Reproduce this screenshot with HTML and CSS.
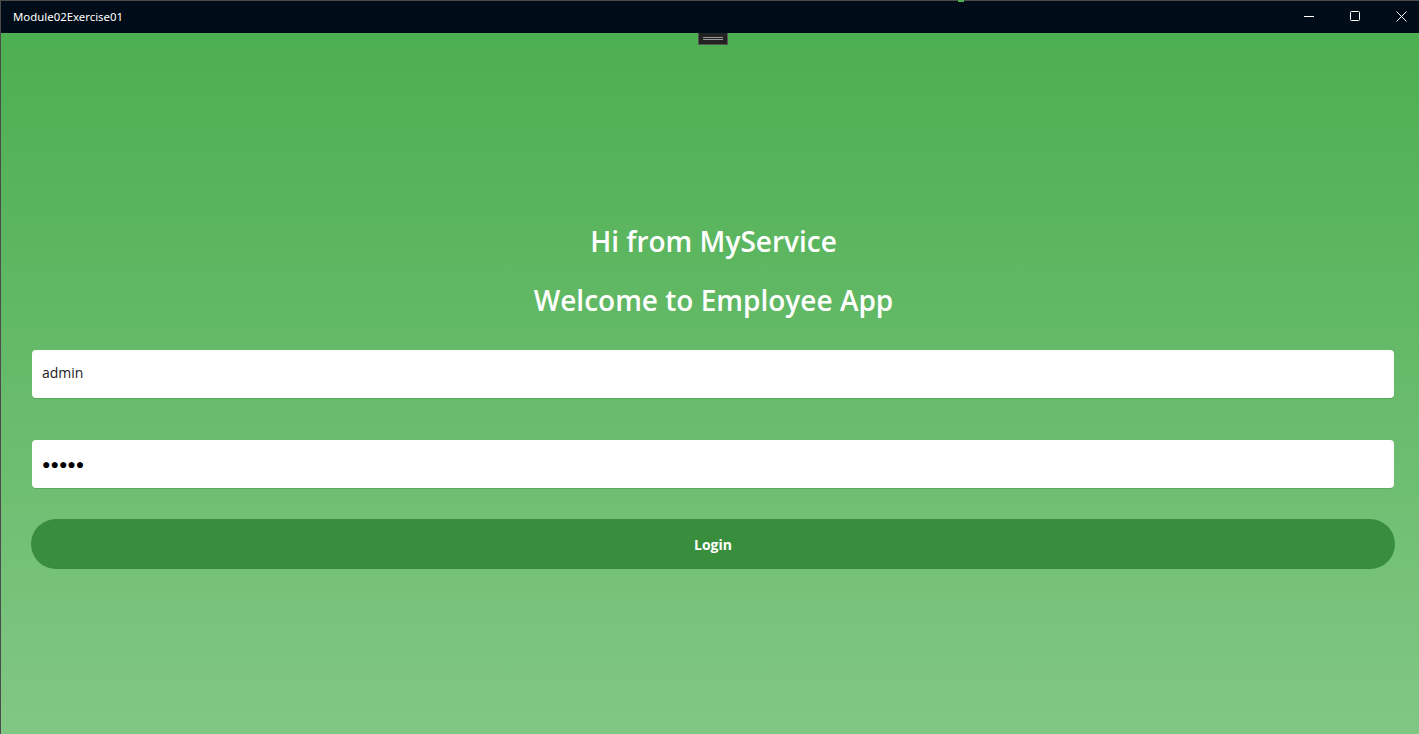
FILE: index.html
```html
<!DOCTYPE html>
<html>
<head>
<meta charset="utf-8">
<link rel="stylesheet" href="styles.css">
</head>
<body>
<div class="window">
  <div class="titlebar">
    <span class="title">Module02Exercise01</span>
    <span class="tb-accent"></span>
    <div class="controls">
      <span class="ctl">
        <svg width="10" height="10" viewBox="0 0 10 10"><path d="M0 5.5h10" stroke="#fff" stroke-width="1"/></svg>
      </span>
      <span class="ctl">
        <svg width="10" height="10" viewBox="0 0 10 10"><rect x="0.5" y="0.5" width="9" height="9" rx="1" fill="none" stroke="#fff" stroke-width="1"/></svg>
      </span>
      <span class="ctl">
        <svg width="11" height="11" viewBox="0 0 11 11"><path d="M0.5 0.5L10.5 10.5M10.5 0.5L0.5 10.5" stroke="#fff" stroke-width="1"/></svg>
      </span>
    </div>
  </div>
  <div class="content">
    <div class="handle"><span></span><span></span></div>
    <div class="form">
      <h1 class="hi">Hi from MyService</h1>
      <h2 class="welcome">Welcome to Employee App</h2>
      <div class="field">admin</div>
      <div class="field password">●●●●●</div>
      <button class="login">Login</button>
    </div>
  </div>
</div>
</body>
</html>
```
FILE: styles.css
```css
html, body {
  margin: 0;
  padding: 0;
  width: 1419px;
  height: 734px;
  overflow: hidden;
  background: #4b4b4b;
}
.window {
  height: 733px;
  margin-top: 1px;
  margin-left: 1px;
  display: flex;
  flex-direction: column;
  font-family: "Open Sans", sans-serif;
}
.titlebar {
  height: 32px;
  background: #000c17;
  display: flex;
  align-items: center;
  position: relative;
}
.tb-accent {
  position: absolute;
  top: -1px;
  left: 957px;
  width: 6px;
  height: 2px;
  background: #4caf50;
}
.title {
  color: #fff;
  font-family: "Noto Sans", sans-serif;
  font-size: 11.4px;
  margin-left: 12px;
  margin-top: -1px;
}
.controls {
  margin-left: auto;
  margin-right: -5px;
  display: flex;
  height: 32px;
}
.ctl {
  width: 46px;
  display: flex;
  align-items: center;
  justify-content: center;
  margin-top: -2px;
}
.content {
  flex: 1;
  background: linear-gradient(to bottom, #4caf50, #81c784);
  position: relative;
  padding: 0 25px 0 31px;
}
.handle {
  position: absolute;
  left: 697px;
  top: 0;
  width: 28px;
  height: 11px;
  background: #222;
  border: 1px solid #555;
  border-top: none;
  display: flex;
  flex-direction: column;
  align-items: center;
  justify-content: center;
  gap: 1px;
}
.handle span {
  display: block;
  width: 20px;
  height: 1px;
  background: #999;
}
.form {
  padding-top: 186px;
  display: flex;
  flex-direction: column;
}
.hi, .welcome {
  margin: 0;
  color: #fff;
  font-weight: 600;
  text-align: center;
  margin-left: 1px;
  font-size: 28px;
  line-height: 44px;
}
.welcome {
  margin-top: 15px;
}
.field {
  height: 48px;
  box-sizing: border-box;
  background: #fff;
  border-radius: 4px;
  box-shadow: 0 1px 0 rgba(0,0,0,0.12);
  display: flex;
  align-items: center;
  padding: 0 0 3px 10px;
  font-size: 14px;
  color: #1b1b1b;
  margin-top: 28px;
}
.password {
  margin-top: 42px;
  font-size: 14px;
  padding-bottom: 1px;
  color: #000;
}
.login {
  margin-top: 31px;
  height: 50px;
  border: none;
  border-radius: 25px;
  background: #388e3c;
  color: #fff;
  font-family: "Open Sans", sans-serif;
  font-weight: 700;
  font-size: 14px;
  margin-right: -1px;
  margin-left: -1px;
}
```
